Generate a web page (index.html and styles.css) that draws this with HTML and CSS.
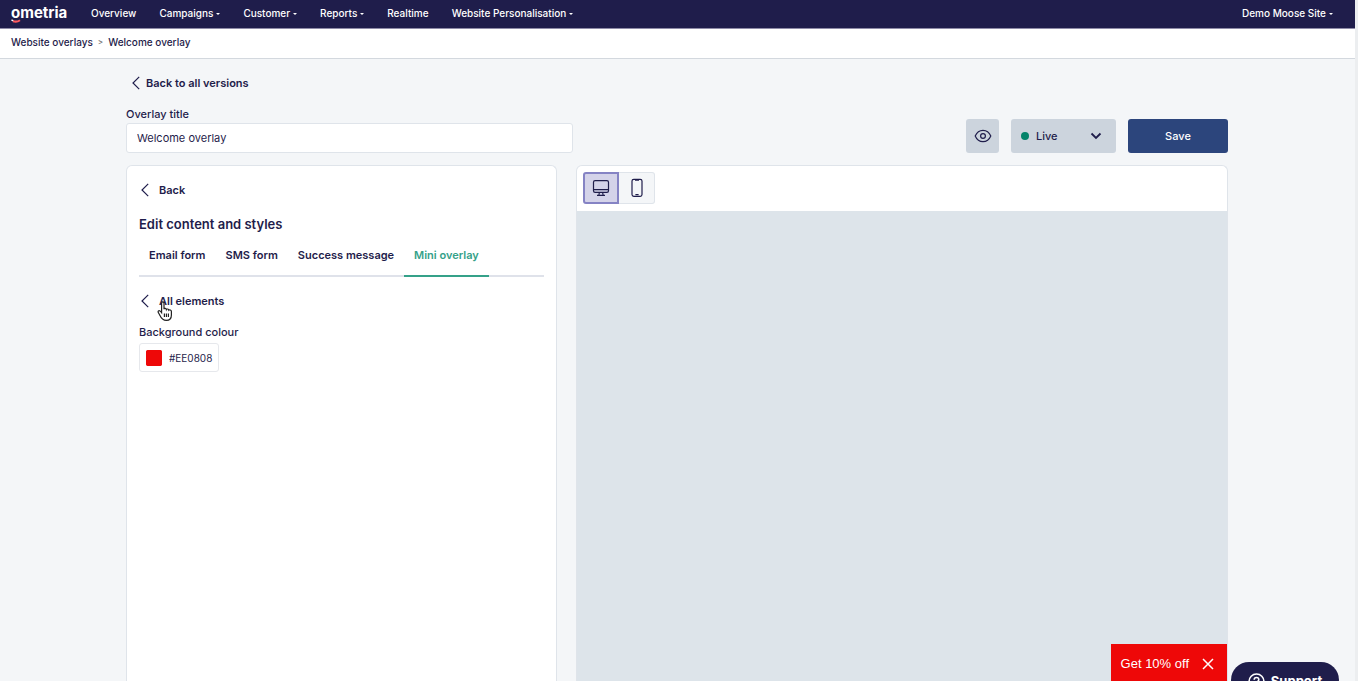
FILE: index.html
```html
<!DOCTYPE html>
<html lang="en">
<head>
  <meta charset="UTF-8">
  <meta name="viewport" content="width=device-width, initial-scale=1.0">
  <title>Welcome overlay</title>
  <link rel="stylesheet" href="styles.css">
</head>
<body>
  <header class="topbar">
    <a class="logo" href="#">ometria
      <svg class="logo-smile" width="10" height="4" viewBox="0 0 10 4"><path d="M0.5 1 L2.5 1.8" stroke="#fff" stroke-width="1.4"/><path d="M2 2.2 Q6 3.4 9 1.2" stroke="#ff5a5f" stroke-width="2"/></svg>
    </a>
    <nav class="nav">
      <a href="#">Overview</a>
      <button type="button">Campaigns<span class="caret"></span></button>
      <button type="button">Customer<span class="caret"></span></button>
      <button type="button">Reports<span class="caret"></span></button>
      <a href="#">Realtime</a>
      <button type="button">Website Personalisation<span class="caret"></span></button>
    </nav>
    <button class="site" type="button">Demo Moose Site<span class="caret"></span></button>
  </header>

  <nav class="breadcrumb">
    <a href="#">Website overlays</a>
    <span class="sep">&gt;</span>
    <a href="#">Welcome overlay</a>
  </nav>

  <main class="page">
    <div class="page-head">
      <div class="title-field">
        <a class="back page-back" href="#">
          <svg width="8" height="14" viewBox="0 0 8 14"><path d="M7.2 0.8 L1 7 L7.2 13.2"/></svg>
          Back to all versions
        </a>
        <label for="overlayTitle">Overlay title</label>
        <input type="text" id="overlayTitle" value="Welcome overlay">
      </div>
      <div class="actions">
        <button class="preview-btn" type="button" aria-label="Preview">
          <svg width="18" height="14" viewBox="0 0 18 14"><path d="M1.2 7 C4.5 -0.6 13.5 -0.6 16.8 7 C13.5 14.6 4.5 14.6 1.2 7 Z"/><circle cx="9" cy="7" r="2.4"/></svg>
        </button>
        <div class="status">
          <span class="dot"></span>
          <select aria-label="Status">
            <option>Live</option>
            <option>Draft</option>
          </select>
          <svg class="chevron" width="12" height="8" viewBox="0 0 12 8"><path d="M1.5 1.5 L6 6 L10.5 1.5"/></svg>
        </div>
        <button class="save" type="button">Save</button>
      </div>
    </div>

    <div class="columns">
      <section class="editor">
        <a class="back" href="#">
          <svg width="8" height="14" viewBox="0 0 8 14"><path d="M7.2 0.8 L1 7 L7.2 13.2"/></svg>
          Back
        </a>
        <h1>Edit content and styles</h1>
        <div class="tabs">
          <button type="button">Email form</button>
          <button type="button">SMS form</button>
          <button type="button">Success message</button>
          <button type="button" class="active">Mini overlay</button>
        </div>
        <a class="back" href="#">
          <svg width="8" height="14" viewBox="0 0 8 14"><path d="M7.2 0.8 L1 7 L7.2 13.2"/></svg>
          All elements
          <svg class="pointer" width="16" height="21" viewBox="0 0 16 21"><path d="M4.6 2.2 C4.6 0.4 7 0.4 7 2.2 V8.2 C7.3 7 9.2 7.1 9.4 8.6 C9.9 7.6 11.6 7.9 11.8 9.2 C12.5 8.5 14.4 8.9 14.4 10.6 V14 C14.4 17.4 12.6 19.4 9.4 19.4 C5.6 19.4 3.8 16.4 2.4 13.4 C1.8 12.2 0.4 10.8 1.4 10 C2.4 9.2 3.6 10.2 4.6 11.6 Z"/><path d="M7.4 12.6 V16 M9.4 12.6 V16 M11.4 12.6 V16"/></svg>
        </a>
        <label for="bgColour">Background colour</label>
        <div class="colour">
          <input type="color" value="#ee0808" aria-label="Pick background colour">
          <input type="text" id="bgColour" value="#EE0808">
        </div>
      </section>

      <section class="preview">
        <div class="devices">
          <button type="button" class="active" aria-label="Desktop">
            <svg width="18" height="18" viewBox="0 0 18 18"><rect x="1.5" y="1.7" width="15" height="11.6" rx="1.6"/><path d="M1.5 10.6 H16.5 M7.4 13.3 L6.9 16 M10.6 13.3 L11.1 16 M5 16.3 H13"/></svg>
          </button>
          <button type="button" aria-label="Mobile">
            <svg width="12" height="20" viewBox="0 0 12 20"><rect x="1" y="1.3" width="10" height="17" rx="1.8"/><path d="M4 2.2 H8 M4.4 16.6 H7.6"/></svg>
          </button>
        </div>
        <div class="canvas">
          <div class="mini-overlay">
            Get 10% off
            <button type="button" aria-label="Close">
              <svg width="12" height="12" viewBox="0 0 12 12"><path d="M1 1 L11 11 M11 1 L1 11"/></svg>
            </button>
          </div>
        </div>
      </section>
    </div>
  </main>

  <button class="support" type="button">
    <svg width="17" height="17" viewBox="0 0 17 17"><circle cx="8.5" cy="8.5" r="7.5"/><path d="M6.2 6.8 C6.2 3.8 10.8 3.8 10.8 6.8 C10.8 8.4 8.5 8.4 8.5 10.2 M8.5 11.6 V13"/></svg>
    Support
  </button>
</body>
</html>
```
FILE: styles.css
```css
* {
  box-sizing: border-box;
}

html, body {
  margin: 0;
  height: 100%;
}

body {
  display: flex;
  flex-direction: column;
  overflow: hidden;
  border-right: 3px solid #eceef0;
  background: #f4f6f8;
  color: #1f1d4b;
  font-family: Inter, "Liberation Sans", sans-serif;
  font-size: 11px;
  line-height: 18px;
}

a {
  color: inherit;
  text-decoration: none;
}

button, input, select {
  font: inherit;
  color: inherit;
}

button {
  padding: 0;
  border: none;
  background: none;
  cursor: pointer;
}

svg {
  fill: none;
  stroke: #1f1d4b;
  stroke-width: 1.2;
  flex-shrink: 0;
}

/* top bar */
.topbar {
  display: flex;
  align-items: center;
  height: 29px;
  padding: 0 22px 2px 11px;
  border-bottom: 1px solid #8e8ba8;
  background: #1f1d4b;
  color: #fff;
  font-size: 10px;
  font-weight: 500;
}

.logo {
  position: relative;
  width: 80px;
  font-size: 15px;
  font-weight: 700;
}

.logo-smile {
  position: absolute;
  left: 0;
  bottom: -1px;
}

.nav {
  display: flex;
  gap: 23px;
}

.caret {
  display: inline-block;
  margin-left: 3px;
  vertical-align: 2px;
  border: 2px solid transparent;
  border-top-color: #fff;
  border-bottom: none;
}

.site {
  margin-left: auto;
}

.breadcrumb {
  display: flex;
  align-items: center;
  gap: 5px;
  height: 30px;
  padding: 0 11px 3px;
  border-bottom: 1px solid #d3d8de;
  background: #fff;
  font-size: 10px;
  font-weight: 500;
}

.sep {
  color: #777;
  font-size: 8px;
}

/* page */
.page {
  display: flex;
  flex-direction: column;
  flex: 1;
  min-height: 0;
  padding: 15px 127px 0 126px;
}

.page-head {
  display: flex;
  align-items: flex-end;
  justify-content: space-between;
  margin-bottom: 12px;
}

.title-field {
  width: 447px;
}

.back {
  position: relative;
  display: flex;
  align-items: center;
  gap: 10px;
  padding-left: 2px;
  font-weight: 600;
}

.page-back {
  gap: 6px;
  padding-left: 6px;
  margin-bottom: 13px;
}

label {
  display: block;
  font-weight: 500;
}

input[type="text"] {
  display: block;
  width: 100%;
  height: 30px;
  padding: 0 10px;
  border: 1px solid #dfe4ea;
  border-radius: 3px;
  background: #fff;
}

.actions {
  display: flex;
  gap: 12px;
  height: 34px;
}

.preview-btn {
  display: flex;
  align-items: center;
  justify-content: center;
  width: 33px;
  border-radius: 3px;
  background: #ccd4dd;
}

.status {
  position: relative;
  width: 105px;
}

.status select {
  appearance: none;
  width: 100%;
  height: 100%;
  padding: 0 25px;
  border: none;
  border-radius: 3px;
  background: #ccd4dd;
  font-weight: 500;
}

.dot {
  position: absolute;
  top: 13px;
  left: 10px;
  width: 8px;
  height: 8px;
  border-radius: 50%;
  background: #04836a;
}

.chevron {
  position: absolute;
  top: 13px;
  right: 14px;
  stroke-width: 1.8;
}

.save {
  width: 100px;
  border-radius: 3px;
  background: #2c457c;
  color: #fff;
  font-weight: 500;
}

.columns {
  display: flex;
  flex: 1;
  gap: 19px;
  min-height: 0;
}

/* editor */
.editor {
  width: 431px;
  padding: 15px 12px;
  border: 1px solid #dfe4ea;
  border-bottom: none;
  border-radius: 6px 6px 0 0;
  background: #fff;
}

h1 {
  margin: 16px 0 13px;
  font-size: 13px;
  line-height: 18px;
  font-weight: 600;
}

.tabs {
  display: flex;
  margin-bottom: 15px;
  border-bottom: 2px solid #dfe2ea;
}

.tabs button {
  height: 31px;
  margin-bottom: -2px;
  padding: 0 10px 11px;
  border-bottom: 2px solid transparent;
  font-weight: 600;
}

.tabs .active {
  border-color: #35a189;
  color: #35a189;
}

.editor label {
  margin: 13px 0 2px;
}

.pointer {
  position: absolute;
  top: 9px;
  left: 18px;
  fill: #fff;
  stroke: #222;
}

.colour {
  display: flex;
  align-items: center;
  gap: 7px;
  width: 80px;
  height: 29px;
  padding: 0 0 0 6px;
  border: 1px solid #e6e8ec;
  border-radius: 3px;
}

.colour input[type="color"] {
  flex-shrink: 0;
  width: 16px;
  height: 16px;
  padding: 0;
  border: none;
  border-radius: 2px;
  background: #ee0808;
}

.colour input[type="color"]::-webkit-color-swatch-wrapper {
  padding: 0;
}

.colour input[type="color"]::-webkit-color-swatch {
  border: none;
  border-radius: 2px;
}

.colour input[type="text"] {
  min-width: 0;
  height: 20px;
  padding: 0;
  border: none;
  font-size: 10px;
}

/* preview */
.preview {
  display: flex;
  flex-direction: column;
  flex: 1;
  border: 1px solid #dfe4ea;
  border-bottom: none;
  border-radius: 6px 6px 0 0;
  background: #fff;
}

.devices {
  display: flex;
  height: 45px;
  padding: 6px;
}

.devices button {
  display: flex;
  align-items: center;
  justify-content: center;
  width: 36px;
  height: 32px;
  border: 1px solid #dfe4ea;
  border-left: none;
  border-radius: 0 3px 3px 0;
  background: #f4f6f8;
}

.devices .active {
  border: 2px solid #8583c4;
  border-radius: 3px 0 0 3px;
  background: #d4d3e9;
}

.canvas {
  position: relative;
  flex: 1;
  background: #dde4ea;
}

.mini-overlay {
  position: absolute;
  right: 0;
  bottom: 0;
  display: flex;
  align-items: center;
  gap: 13px;
  height: 37px;
  padding: 2px 13px 0 10px;
  background: #ee0808;
  color: #fff;
  font-family: "Liberation Sans", Arial, sans-serif;
  font-size: 13px;
}

.mini-overlay button {
  display: flex;
}

.mini-overlay svg {
  stroke: #fff;
  stroke-width: 1.5;
}

/* support launcher, partly below the fold */
.support {
  position: fixed;
  right: 19px;
  bottom: -17px;
  display: flex;
  align-items: center;
  justify-content: center;
  gap: 6px;
  width: 108px;
  height: 36px;
  padding-top: 2px;
  border-radius: 18px;
  background: #1f1d4b;
  color: #fff;
  font-size: 13px;
  font-weight: 700;
}

.support svg {
  stroke: #fff;
  stroke-width: 1.6;
}
```
